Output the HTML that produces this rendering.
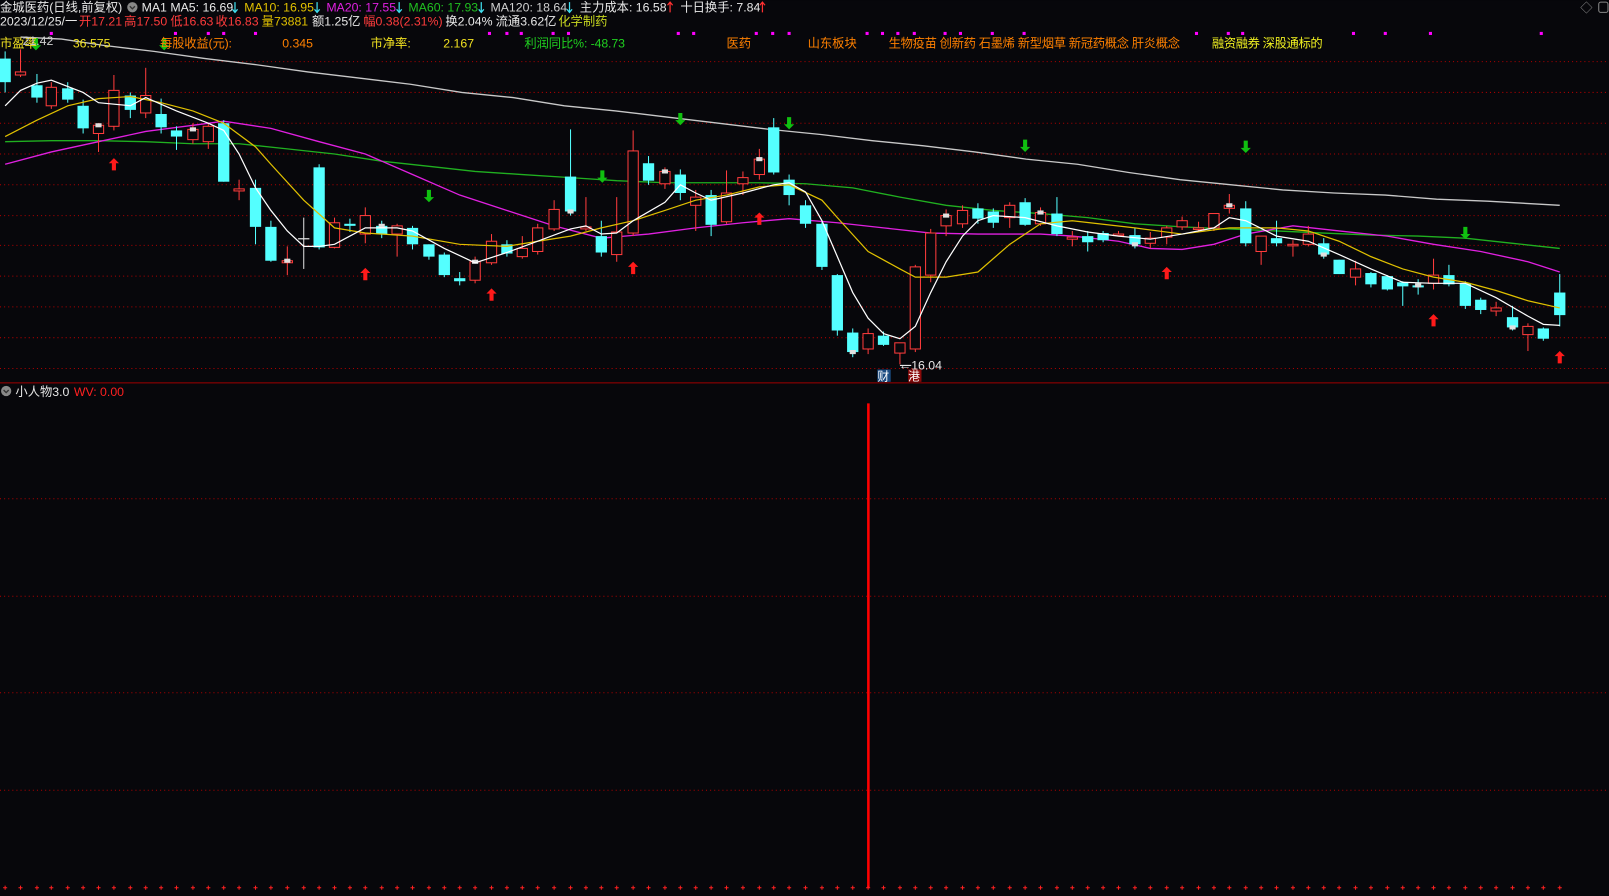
<!DOCTYPE html>
<html><head><meta charset="utf-8">
<style>
html,body{margin:0;padding:0;background:#07070b;overflow:hidden}
svg{display:block}
text{font-family:"Liberation Sans","Noto Sans CJK SC",sans-serif;font-size:12px}
</style></head>
<body>
<svg id="s" width="1609" height="896" viewBox="0 0 1568 873" xmlns="http://www.w3.org/2000/svg">
<rect width="1568" height="873" fill="#07070b"/>
<g id="grid"></g>
<line x1="0" y1="373" x2="1568" y2="373" stroke="#a00000" stroke-width="1"/>
<polyline fill="none" stroke="#c8c8c8" stroke-width="1.3" points="20,36 60,38 100,44 150,50 200,57 250,63 300,70 350,76 400,82 450,90 500,95 550,103 600,108 650,114 700,120 750,126 800,131 850,137 900,142 950,148 1000,155 1050,160 1100,168 1150,175 1200,180 1250,185 1300,188 1350,190 1400,194 1450,196 1520,200"/>
<polyline fill="none" stroke="#20b020" stroke-width="1.3" points="5,138 50,137 96,137 142,138 188,140 233,140 280,145 326,150 372,157 418,162 463,167 509,170 556,173 601,176 648,178 693,178 740,178 785,179 831,183 877,192 922,200 968,205 1014,208 1060,212 1106,218 1152,221 1198,223 1244,225 1290,227 1336,229 1382,230 1428,232 1474,237 1520,242"/>
<polyline fill="none" stroke="#e020e0" stroke-width="1.3" points="5,160 50,148 96,138 142,128 188,122 218,118 264,125 311,138 356,150 402,170 448,190 494,205 540,220 586,232 632,228 678,222 724,217 769,213 816,217 861,222 907,227 953,228 1014,228 1045,230 1090,235 1121,242 1152,243 1183,238 1214,228 1260,220 1305,225 1352,230 1397,238 1443,245 1489,255 1520,265"/>
<g id="candles"></g>
<polyline fill="none" stroke="#e0c000" stroke-width="1.2" points="5,133 36,117 66,103 96,96 127,94 157,100 188,108 218,120 249,143 264,160 296,195 326,222 356,227 402,230 448,238 494,240 524,235 556,230 586,222 617,215 648,205 678,195 708,190 740,182 769,180 801,195 816,212 846,245 877,262 892,270 922,270 953,265 984,238 1014,218 1045,215 1106,222 1152,228 1198,222 1244,222 1275,225 1305,235 1336,250 1367,262 1397,270 1428,275 1458,283 1489,293 1520,300"/>
<polyline fill="none" stroke="#ffffff" stroke-width="1.2" points="5,103 20,88 36,81 50,78 81,90 96,100 127,103 142,95 172,108 203,120 218,127 233,150 249,183 264,205 280,225 296,240 311,240 326,238 341,230 356,222 387,222 402,225 433,242 463,256 494,246 524,235 556,223 571,220 586,228 601,227 617,215 648,197 663,180 678,188 693,195 724,188 754,180 769,178 785,187 801,215 816,250 831,285 846,310 861,325 877,330 892,318 907,285 922,255 938,230 953,215 968,210 999,212 1030,220 1060,226 1090,230 1121,233 1152,228 1183,222 1198,212 1214,215 1244,230 1275,235 1305,248 1336,262 1367,275 1397,276 1428,276 1458,290 1489,308 1504,316 1520,317"/>
<g id="arrows"></g>
<g id="dots"></g>

<text x="0" y="11" fill="#e8e8e8">金城医药(日线,前复权)</text>
<circle cx="129" cy="7" r="5" fill="#888"/><path d="M126.5,6 L129,8.5 L131.5,6" stroke="#333" fill="none" stroke-width="1.3"/>
<text x="138" y="11" fill="#e8e8e8">MA1</text>
<text x="166" y="11" fill="#e8e8e8">MA5: 16.69</text>
<text x="238" y="11" fill="#e0c000">MA10: 16.95</text>
<text x="318" y="11" fill="#e020e0">MA20: 17.55</text>
<text x="398" y="11" fill="#20c020">MA60: 17.93</text>
<text x="478" y="11" fill="#d0d0d0">MA120: 18.64</text>
<text x="565" y="11" fill="#e8e8e8">主力成本: 16.58</text>
<text x="663" y="11" fill="#e8e8e8">十日换手: 7.84</text>
<g stroke-width="1.2" fill="none">
<path d="M229,2 v10 M226.5,9 l2.5,3 l2.5,-3" stroke="#40e0f0"/>
<path d="M309,2 v10 M306.5,9 l2.5,3 l2.5,-3" stroke="#40e0f0"/>
<path d="M389,2 v10 M386.5,9 l2.5,3 l2.5,-3" stroke="#40e0f0"/>
<path d="M469,2 v10 M466.5,9 l2.5,3 l2.5,-3" stroke="#40e0f0"/>
<path d="M555,2 v10 M552.5,9 l2.5,3 l2.5,-3" stroke="#40e0f0"/>
<path d="M653,2 v10 M650.5,5 l2.5,-3 l2.5,3" stroke="#ff3030"/>
<path d="M743,2 v10 M740.5,5 l2.5,-3 l2.5,3" stroke="#ff3030"/>
</g>
<text x="1540" y="12" fill="#888">◇</text>
<rect x="1558" y="2" width="9" height="10" fill="none" stroke="#888" rx="2"/>
<text x="0" y="25" fill="#e8e8e8">2023/12/25/一</text>
<text x="77" y="25" fill="#ff3c3c">开17.21</text>
<text x="121" y="25" fill="#ff3c3c">高17.50</text>
<text x="166" y="25" fill="#ff3c3c">低16.63</text>
<text x="210" y="25" fill="#ff3c3c">收16.83</text>
<text x="255" y="25" fill="#e0c000">量73881</text>
<text x="304" y="25" fill="#e8e8e8">额1.25亿</text>
<text x="354" y="25" fill="#ff3c3c">幅0.38(2.31%)</text>
<text x="434" y="25" fill="#e8e8e8">换2.04%</text>
<text x="483" y="25" fill="#e8e8e8">流通3.62亿</text>
<text x="544" y="25" fill="#c8d820">化学制药</text>
<text x="0" y="46" fill="#f0e020">市盈率</text>
<text x="22" y="44" fill="#d0d0d0">21.42</text>
<text x="71" y="46" fill="#f0e020">36.575</text>
<text x="156" y="46" fill="#ff8000" textLength="70">每股收益(元):</text>
<text x="275" y="46" fill="#ff8000">0.345</text>
<text x="361" y="46" fill="#f0e020">市净率:</text>
<text x="432" y="46" fill="#f0e020">2.167</text>
<text x="511" y="46" fill="#20d020" textLength="98">利润同比%: -48.73</text>
<text x="708" y="46" fill="#ff8000">医药</text>
<text x="787" y="46" fill="#ff8000">山东板块</text>
<text x="866" y="46" fill="#ff8000" textLength="284">生物疫苗 创新药 石墨烯 新型烟草 新冠药概念 肝炎概念</text>
<text x="1181" y="46" fill="#f0f020" textLength="108">融资融券 深股通标的</text>

<line x1="877" y1="356" x2="888" y2="356" stroke="#fff"/><text x="876" y="360" fill="#e8e8e8">←16.04</text>
<rect x="855" y="360" width="13" height="12" fill="#1a4a80"/><text x="855" y="370.5" fill="#fff" style="font-size:11.5px">财</text>
<rect x="885" y="360" width="13" height="12" fill="#8a0a0a"/><text x="885" y="370.5" fill="#fff" style="font-size:11.5px">港</text>

<circle cx="6" cy="381" r="5" fill="#888"/><path d="M3.5,380 L6,382.5 L8.5,380" stroke="#333" fill="none" stroke-width="1.3"/>
<text x="15" y="386" fill="#e8e8e8">小人物3.0</text>
<text x="72" y="386" fill="#ff2020">WV: 0.00</text>
<rect x="845" y="393" width="2.5" height="472" fill="#ff0000"/>
<g id="cross"></g>
</svg>
<script>
var NS="http://www.w3.org/2000/svg";
function el(p,t,a){var e=document.createElementNS(NS,t);for(var k in a)e.setAttribute(k,a[k]);document.getElementById(p).appendChild(e);return e;}
[60,90,120,150,180,210,239,269,299,329,359,486,581,675,770].forEach(function(y){
 el("grid","line",{x1:0,y1:y,x2:1568,y2:y,stroke:"#b00000","stroke-width":1,"stroke-dasharray":"1 3"});
});
var C=[[5,57,80,50,90,'c'],[20,70,73,48,75,'r'],[36,83,95,72,100,'c'],[50,85,103,80,106,'r'],[66,86,97,80,100,'c'],[81,103,125,97,130,'c'],[96,122,130,120,148,'r',1],[111,88,123,73,127,'r'],[127,93,107,90,115,'c'],[142,93,110,66,115,'r'],[157,111,124,96,130,'c'],[172,127,133,123,146,'c'],[188,126,136,120,140,'r',1],[203,123,138,120,145,'r'],[218,120,177,117,177,'c'],[233,184,186,175,195,'r'],[249,183,221,175,238,'c'],[264,221,254,215,255,'c'],[280,254,256,240,268,'r',1],[296,232,233,212,262,'w'],[311,163,241,160,243,'c'],[326,217,241,212,242,'r'],[341,218,220,213,226,'c'],[356,210,228,202,237,'r'],[372,220,228,215,232,'c',1],[387,220,228,218,250,'r'],[402,222,238,220,243,'c'],[418,238,250,238,253,'c'],[433,248,268,246,270,'c'],[448,271,274,265,278,'c'],[463,255,273,250,276,'r',1],[479,235,256,228,258,'r'],[494,238,247,234,250,'c'],[509,242,250,230,252,'r'],[524,222,245,218,248,'r'],[540,204,223,195,225,'r'],[556,172,206,126,210,'c',2],[571,221,223,192,225,'r'],[586,230,246,215,250,'c'],[601,226,248,192,255,'r'],[617,147,227,127,230,'r'],[632,159,176,152,180,'c'],[648,167,179,163,184,'r',1],[663,170,188,165,195,'c'],[678,192,200,185,225,'r'],[693,190,219,185,230,'c'],[708,188,216,166,218,'r'],[724,173,179,167,190,'r'],[740,155,170,145,175,'r',1],[754,124,168,115,170,'c'],[769,175,190,170,200,'c'],[785,200,218,195,222,'c'],[801,218,260,216,263,'c'],[816,268,322,267,327,'c'],[831,324,343,320,348,'c',2],[846,325,340,320,345,'r'],[861,327,336,323,337,'c'],[877,334,344,334,355,'r'],[892,260,340,258,343,'r'],[907,227,268,223,275,'r'],[922,210,220,204,230,'r',1],[938,205,218,200,222,'r'],[953,203,213,198,218,'c'],[968,206,217,203,222,'c'],[984,200,212,197,222,'r'],[999,197,219,193,220,'c'],[1014,207,218,202,220,'r',1],[1030,208,228,192,230,'c'],[1045,231,233,225,240,'r'],[1060,230,236,225,245,'c'],[1075,227,234,225,236,'c'],[1090,228,229.5,225,230,'r'],[1106,229,238,222,242,'c',2],[1121,232,237,226,242,'r'],[1137,222,231,220,238,'r'],[1152,215,221,211,224,'r'],[1168,222,223.5,216,226,'r'],[1183,208,222,208,225,'r'],[1198,200,203,189,208,'r',1],[1214,203,237,196,240,'c'],[1229,230,245,230,258,'r'],[1244,232,237,215,240,'c'],[1260,238,239.5,234,250,'r'],[1275,228,238,220,240,'r'],[1290,237,248,232,252,'c',2],[1305,253,267,253,267,'c'],[1321,262,270,254,278,'r'],[1336,266,277,265,280,'c'],[1352,269,282,268,283,'c'],[1367,275,279,274,298,'c'],[1382,278,280,272,287,'c',1],[1397,268,276,252,282,'r'],[1412,268,277,258,279,'c'],[1428,276,298,274,301,'c'],[1443,292,302,290,306,'c'],[1458,300,303,294,308,'r'],[1474,309,319,298,322,'c',2],[1489,318,326,315,342,'r'],[1504,320,330,319,332,'c'],[1520,285,307,267,318,'c']];
C.forEach(function(d){
 var x=d[0],t=d[1],b=d[2],h=d[3],l=d[4],k=d[5];
 var col=k=='c'?'#54ffff':(k=='r'?'#ff3c3c':'#e0e0e0');
 el("candles","line",{x1:x,y1:h,x2:x,y2:l,stroke:col,"stroke-width":1});
 var hgt=Math.max(b-t,1.2);
 if(k=='c'||k=='w') el("candles","rect",{x:x-5.5,y:t,width:11,height:hgt,fill:col});
 else el("candles","rect",{x:x-5,y:t,width:10,height:hgt,fill:"#07070b",stroke:col,"stroke-width":1});
 if(d[6]){var sy=d[6]==1?t-2:b-2;el("candles","rect",{x:x-3,y:sy,width:6,height:4,fill:"#e0e0e0"});}
 el("cross","path",{d:"M"+(x-2)+",865 h4 M"+x+",863 v4",stroke:"#ff2020","stroke-width":1});
});
function arrow(x,y,up,col){
 var d=up?"M"+x+","+(y-6)+" l-5,5 h3 v7 h4 v-7 h3 z":"M"+x+","+(y+6)+" l-5,-5 h3 v-7 h4 v7 h3 z";
 el("arrows","path",{d:d,fill:col});
}
[[111,160],[356,267],[479,287],[617,261],[740,213],[1137,266],[1397,312],[1520,348]].forEach(function(p){arrow(p[0],p[1],true,"#ff1a1a");});
[[35,43],[160,43],[418,191],[587,172],[663,116],[769,120],[999,142],[1214,143],[1428,227]].forEach(function(p){arrow(p[0],p[1],false,"#10c010");});
[50,171,203,218,249,477,494,508,539,554,661,676,737,753,769,845,860,875,891,921,936,967,998,1166,1197,1211,1319,1350,1394,1502].forEach(function(x){
 el("dots","rect",{x:x-1.5,y:31,width:3,height:3,fill:"#ff00ff"});
});
</script>
</body></html>
